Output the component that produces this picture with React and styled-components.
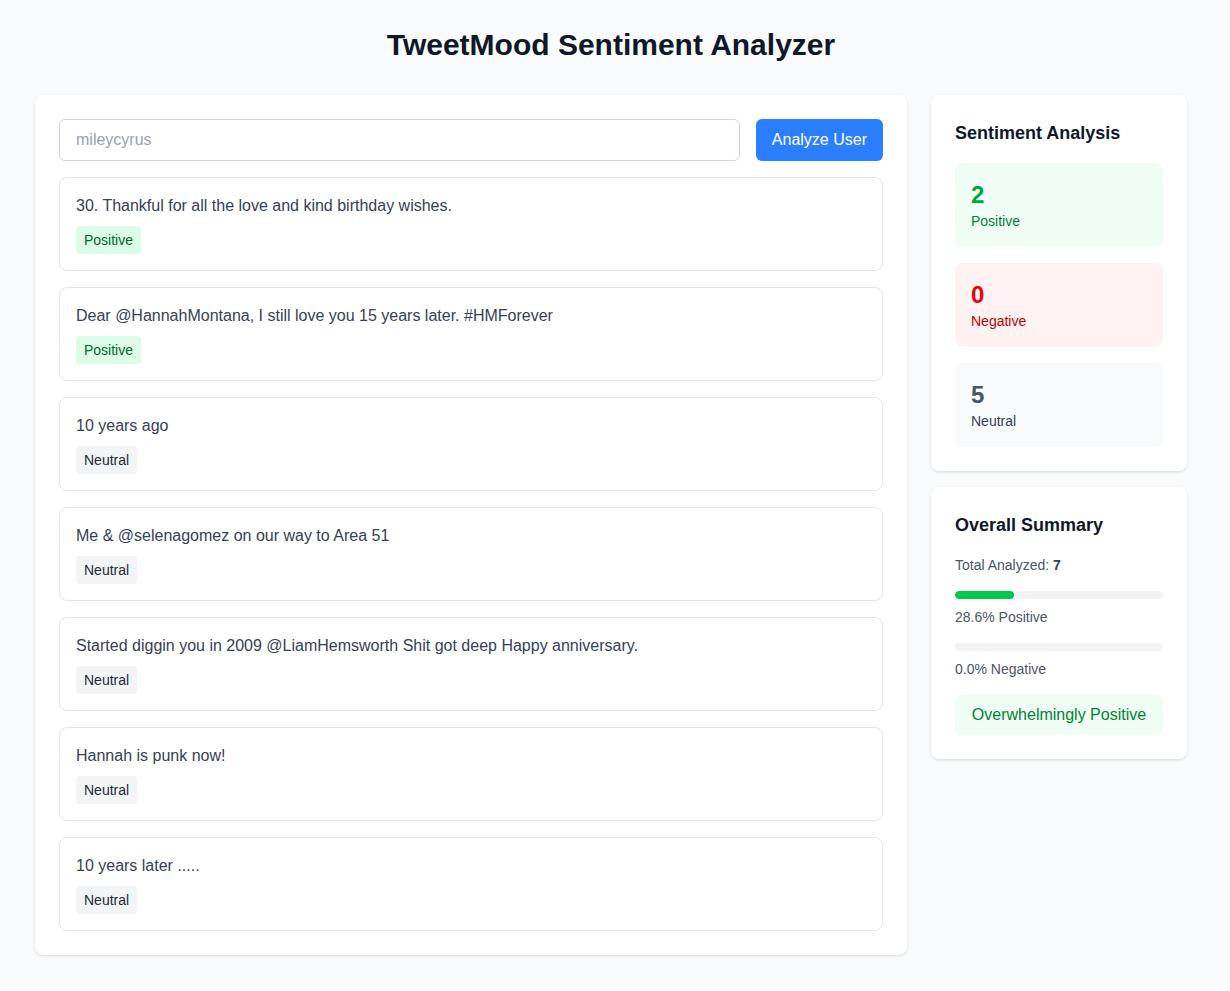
import styled, { createGlobalStyle } from "styled-components";

const GlobalStyle = createGlobalStyle`
  * {
    box-sizing: border-box;
  }
  body {
    margin: 0;
    background: #f9fafb;
    font-family: "Liberation Sans", Arial, sans-serif;
    color: #101828;
  }
`;

const Page = styled.div`
  width: 1222px;
  padding: 27px 0 36px;
`;

const Title = styled.h1`
  margin: 0 0 32px;
  font-size: 30px;
  line-height: 36px;
  font-weight: 700;
  text-align: center;
  color: #101828;
`;

const Layout = styled.div`
  max-width: 1152px;
  margin: 0 auto;
  display: flex;
  align-items: flex-start;
  gap: 24px;
`;

const Card = styled.div`
  background: #fff;
  border-radius: 8px;
  padding: 24px;
  box-shadow: 0 1px 3px rgba(0, 0, 0, 0.1), 0 1px 2px -1px rgba(0, 0, 0, 0.1);
`;

const MainCard = styled(Card)`
  flex: 1;
  display: flex;
  flex-direction: column;
  gap: 16px;
`;

const Sidebar = styled.div`
  width: 256px;
  flex-shrink: 0;
  display: flex;
  flex-direction: column;
  gap: 16px;
`;

const SearchRow = styled.form`
  display: flex;
  gap: 16px;
`;

const Input = styled.input`
  flex: 1;
  height: 42px;
  padding: 0 16px;
  border: 1px solid #d1d5dc;
  border-radius: 6px;
  font: inherit;
  font-size: 16px;
  color: #364153;
  outline: none;
  &::placeholder {
    color: #99a1af;
  }
`;

const Button = styled.button`
  height: 42px;
  padding: 0 16px;
  border: none;
  border-radius: 6px;
  background: #2b7fff;
  color: #fff;
  font: inherit;
  font-size: 16px;
  cursor: pointer;
`;

const Tweet = styled.div`
  border: 1px solid #e5e7eb;
  border-radius: 8px;
  padding: 16px;
`;

const TweetText = styled.p`
  margin: 0 0 8px;
  font-size: 16px;
  line-height: 24px;
  color: #364153;
`;

const badgeColors = {
  Positive: { bg: "#dcfce7", fg: "#016630" },
  Negative: { bg: "#ffe2e2", fg: "#9f0712" },
  Neutral: { bg: "#f3f4f6", fg: "#1e2939" },
};

const Badge = styled.span`
  display: inline-block;
  padding: 4px 8px;
  border-radius: 4px;
  font-size: 14px;
  line-height: 20px;
  background: ${(p) => badgeColors[p.$type].bg};
  color: ${(p) => badgeColors[p.$type].fg};
`;

const CardTitle = styled.h2`
  margin: 0 0 16px;
  font-size: 18px;
  line-height: 28px;
  font-weight: 700;
  color: #101828;
`;

const StatList = styled.div`
  display: flex;
  flex-direction: column;
  gap: 16px;
`;

const statColors = {
  Positive: { bg: "#f0fdf4", num: "#00a63e", label: "#008236" },
  Negative: { bg: "#fef2f2", num: "#e7000b", label: "#c10007" },
  Neutral: { bg: "#f9fafb", num: "#4a5565", label: "#364153" },
};

const StatBox = styled.div`
  padding: 16px;
  border-radius: 8px;
  background: ${(p) => statColors[p.$type].bg};
`;

const StatNumber = styled.div`
  font-size: 24px;
  line-height: 32px;
  font-weight: 700;
  color: ${(p) => statColors[p.$type].num};
`;

const StatLabel = styled.div`
  font-size: 14px;
  line-height: 20px;
  color: ${(p) => statColors[p.$type].label};
`;

const SummaryBody = styled.div`
  display: flex;
  flex-direction: column;
  gap: 16px;
`;

const SmallText = styled.div`
  font-size: 14px;
  line-height: 20px;
  color: #4a5565;
  b {
    color: #364153;
  }
`;

const BarGroup = styled.div`
  display: flex;
  flex-direction: column;
  gap: 8px;
`;

const Track = styled.div`
  height: 8px;
  border-radius: 9999px;
  background: #f3f4f6;
  overflow: hidden;
`;

const Fill = styled.div`
  height: 100%;
  border-radius: 9999px;
  background: ${(p) => p.$color};
`;

const Verdict = styled.div`
  padding: 8px;
  border-radius: 8px;
  background: #f0fdf4;
  color: #008236;
  font-size: 16px;
  line-height: 24px;
  text-align: center;
`;

const tweets = [
  ["30. Thankful for all the love and kind birthday wishes.", "Positive"],
  ["Dear @HannahMontana, I still love you 15 years later. #HMForever", "Positive"],
  ["10 years ago", "Neutral"],
  ["Me & @selenagomez on our way to Area 51", "Neutral"],
  ["Started diggin you in 2009 @LiamHemsworth Shit got deep Happy anniversary.", "Neutral"],
  ["Hannah is punk now!", "Neutral"],
  ["10 years later .....", "Neutral"],
];

const App = () => {
  const counts = { Positive: 0, Negative: 0, Neutral: 0 };
  tweets.forEach(([, s]) => (counts[s] += 1));
  const total = tweets.length;
  const pos = (counts.Positive / total) * 100;
  const neg = (counts.Negative / total) * 100;

  return (
    <Page>
      <GlobalStyle />
      <Title>TweetMood Sentiment Analyzer</Title>
      <Layout>
        <MainCard>
          <SearchRow onSubmit={(e) => e.preventDefault()}>
            <Input placeholder="mileycyrus" />
            <Button type="submit">Analyze User</Button>
          </SearchRow>
          {tweets.map(([text, s], i) => (
            <Tweet key={i}>
              <TweetText>{text}</TweetText>
              <Badge $type={s}>{s}</Badge>
            </Tweet>
          ))}
        </MainCard>
        <Sidebar>
          <Card>
            <CardTitle>Sentiment Analysis</CardTitle>
            <StatList>
              {["Positive", "Negative", "Neutral"].map((s) => (
                <StatBox key={s} $type={s}>
                  <StatNumber $type={s}>{counts[s]}</StatNumber>
                  <StatLabel $type={s}>{s}</StatLabel>
                </StatBox>
              ))}
            </StatList>
          </Card>
          <Card>
            <CardTitle>Overall Summary</CardTitle>
            <SummaryBody>
              <SmallText>
                Total Analyzed: <b>{total}</b>
              </SmallText>
              <BarGroup>
                <Track>
                  <Fill $color="#00c950" style={{ width: `${pos}%` }} />
                </Track>
                <SmallText>{pos.toFixed(1)}% Positive</SmallText>
              </BarGroup>
              <BarGroup>
                <Track>
                  <Fill $color="#fb2c36" style={{ width: `${neg}%` }} />
                </Track>
                <SmallText>{neg.toFixed(1)}% Negative</SmallText>
              </BarGroup>
              <Verdict>Overwhelmingly Positive</Verdict>
            </SummaryBody>
          </Card>
        </Sidebar>
      </Layout>
    </Page>
  );
};

export default App;
